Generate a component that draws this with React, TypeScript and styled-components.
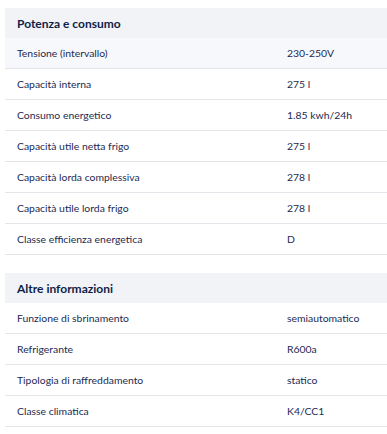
import React from 'react'
import styled, { createGlobalStyle } from 'styled-components'

const Global = createGlobalStyle`
  body {
    margin: 0;
    background: #fff;
    font-family: Lato, "Liberation Sans", sans-serif;
  }
`

const Wrap = styled.div`
  padding: 8px 0 0 5px;
  display: flex;
  flex-direction: column;
  gap: 18px;
`

const Section = styled.section`
  display: flex;
  flex-direction: column;
`

const Head = styled.div`
  height: 30px;
  display: flex;
  align-items: center;
  padding-left: 12px;
  background: #f1f3f7;
  color: #0f1e48;
  font-size: 12px;
  font-weight: 700;
`

const Row = styled.div<{ $shade?: boolean }>`
  display: grid;
  grid-template-columns: 270px 1fr;
  height: 30px;
  align-items: center;
  padding-left: 12px;
  border-bottom: 1px solid #e3e5ea;
  background: ${p => (p.$shade ? '#f6f8fc' : '#fff')};
  color: #1b2a52;
  font-size: 10.4px;
`

const Cell = styled.span`
  white-space: nowrap;
`

type Spec = [string, string]

const power: Spec[] = [
  ['Tensione (intervallo)', '230-250V'],
  ['Capacità interna', '275 l'],
  ['Consumo energetico', '1.85 kwh/24h'],
  ['Capacità utile netta frigo', '275 l'],
  ['Capacità lorda complessiva', '278 l'],
  ['Capacità utile lorda frigo', '278 l'],
  ['Classe efficienza energetica', 'D'],
]

const other: Spec[] = [
  ['Funzione di sbrinamento', 'semiautomatico'],
  ['Refrigerante', 'R600a'],
  ['Tipologia di raffreddamento', 'statico'],
  ['Classe climatica', 'K4/CC1'],
]

const Table: React.FC<{ title: string; rows: Spec[]; shadeFirst?: boolean }> = ({ title, rows, shadeFirst }) => (
  <Section>
    <Head>{title}</Head>
    {rows.map(([k, v], i) => (
      <Row key={k} $shade={shadeFirst && i === 0}>
        <Cell>{k}</Cell>
        <Cell>{v}</Cell>
      </Row>
    ))}
  </Section>
)

const App: React.FC = () => (
  <>
    <Global />
    <Wrap>
      <Table title="Potenza e consumo" rows={power} shadeFirst />
      <Table title="Altre informazioni" rows={other} />
    </Wrap>
  </>
)

export default App
